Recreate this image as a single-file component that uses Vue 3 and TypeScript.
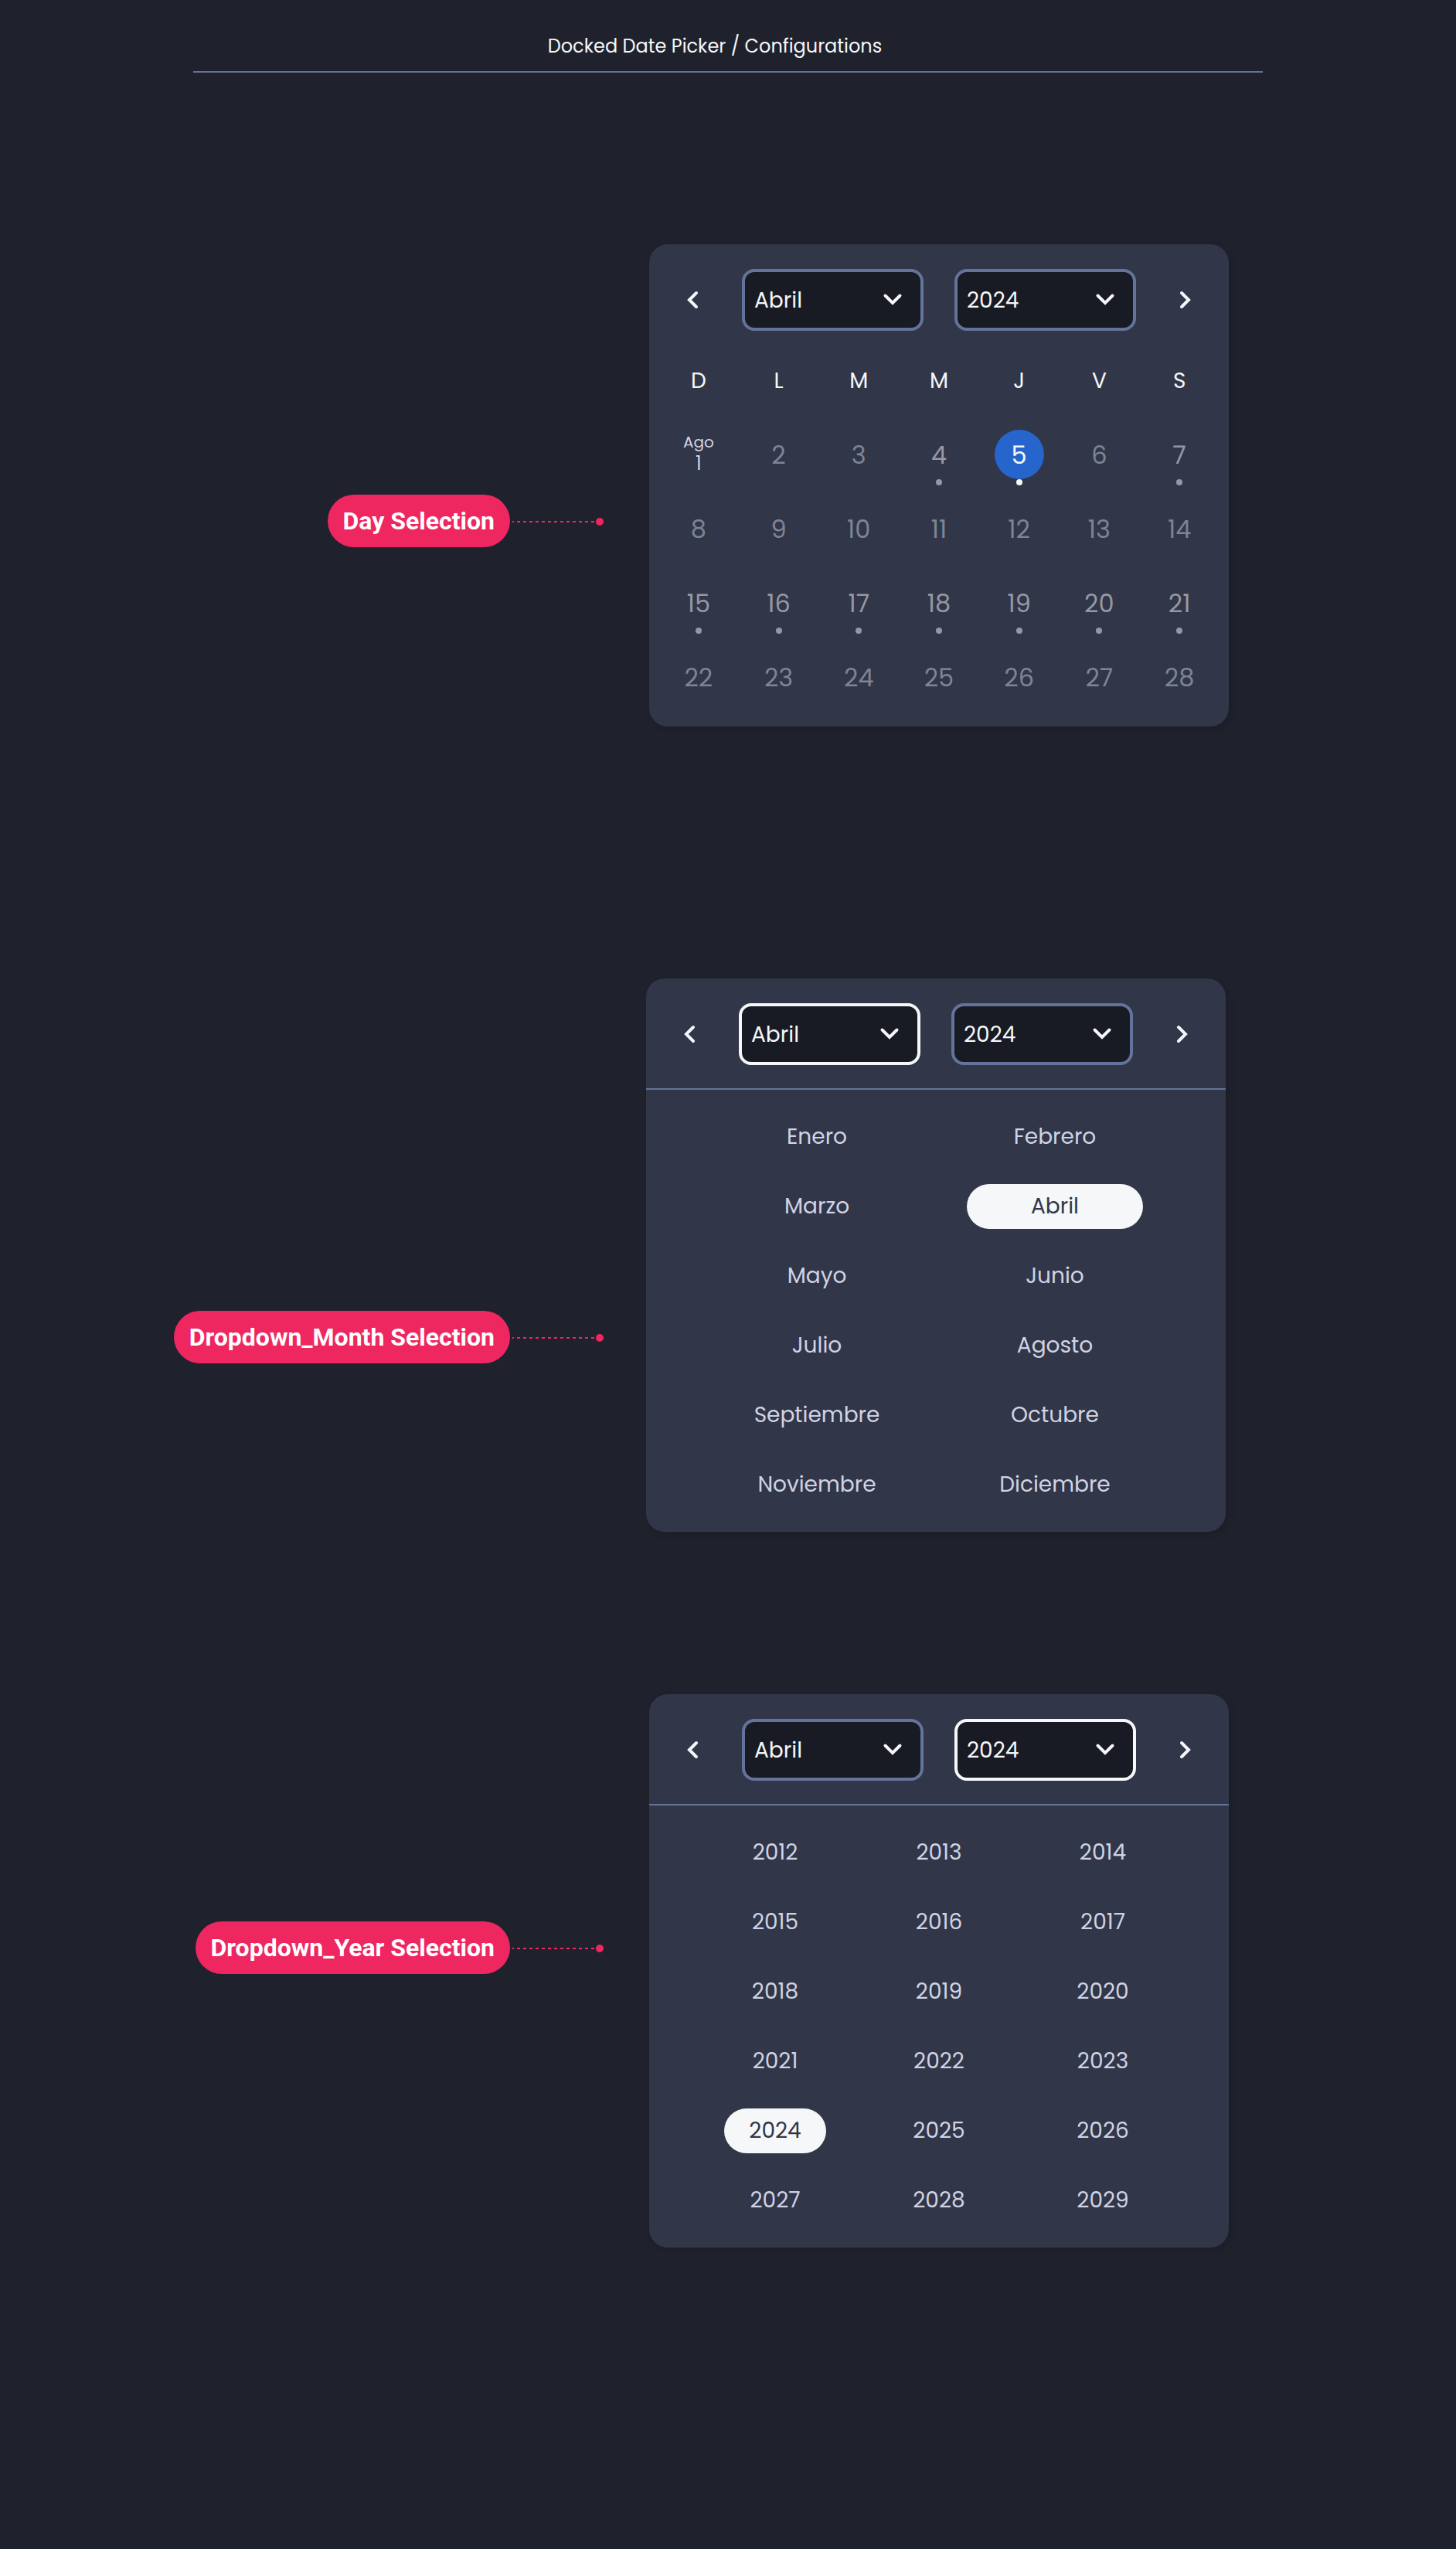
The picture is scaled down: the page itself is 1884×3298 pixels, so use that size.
<script setup lang="ts">
import { ref } from 'vue'

type Mode = 'day' | 'month' | 'year'

interface Example {
  id: string
  label: string
  mode: Mode
}

interface Day {
  value: number
  prefix?: string
  marked?: boolean
}

const examples: Example[] = [
  { id: 'day', label: 'Day Selection', mode: 'day' },
  { id: 'month', label: 'Dropdown_Month Selection', mode: 'month' },
  { id: 'year', label: 'Dropdown_Year Selection', mode: 'year' },
]

const weekdays: string[] = ['D', 'L', 'M', 'M', 'J', 'V', 'S']
const months: string[] = [
  'Enero', 'Febrero', 'Marzo', 'Abril', 'Mayo', 'Junio',
  'Julio', 'Agosto', 'Septiembre', 'Octubre', 'Noviembre', 'Diciembre',
]
const years: number[] = Array.from({ length: 18 }, (_, i) => 2012 + i)

const markedDays = new Set<number>([4, 5, 7, 15, 16, 17, 18, 19, 20, 21])
const weeks: Day[][] = Array.from({ length: 4 }, (_, w) =>
  Array.from({ length: 7 }, (_, d) => {
    const value = w * 7 + d + 1
    return { value, prefix: value === 1 ? 'Ago' : undefined, marked: markedDays.has(value) }
  }),
)

const day = ref<number>(5)
const month = ref<string>('Abril')
const year = ref<number>(2024)

function step(delta: number): void {
  const index = months.indexOf(month.value) + delta
  month.value = months[(index + 12) % 12]
  if (index < 0) year.value -= 1
  if (index > 11) year.value += 1
}
</script>

<template>
  <div class="page">
    <header class="page-header">
      <h1 class="page-title">Docked Date Picker / Configurations</h1>
    </header>

    <main class="board">
      <section v-for="ex in examples" :key="ex.id" class="example" :class="`example-${ex.id}`">
        <div class="callout">
          <h2 class="callout-label">{{ ex.label }}</h2>
          <svg class="callout-line" width="122" height="12" viewBox="0 0 122 12" aria-hidden="true">
            <path d="M3 7H112" stroke="currentColor" stroke-width="2" stroke-dasharray="4 4" stroke-dashoffset="2" fill="none" />
            <circle cx="116" cy="7" r="5" fill="currentColor" />
          </svg>
        </div>

        <div class="picker">
          <div class="toolbar" :class="{ divided: ex.mode !== 'day' }">
            <button type="button" class="arrow" aria-label="Mes anterior" @click="step(-1)">
              <svg width="48" height="48" viewBox="0 0 48 48" aria-hidden="true">
                <path class="stroke" d="M29 15L20 24L29 33" />
              </svg>
            </button>
            <div class="field">
              <select v-model="month" class="select" :class="{ open: ex.mode === 'month' }" aria-label="Mes">
                <option v-for="m in months" :key="m" :value="m">{{ m }}</option>
              </select>
              <svg class="caret" width="48" height="48" viewBox="0 0 48 48" aria-hidden="true">
                <path class="stroke" d="M14.5 18.5L24 28L33.5 18.5" />
              </svg>
            </div>
            <div class="field">
              <select v-model="year" class="select" :class="{ open: ex.mode === 'year' }" aria-label="Año">
                <option v-for="y in years" :key="y" :value="y">{{ y }}</option>
              </select>
              <svg class="caret" width="48" height="48" viewBox="0 0 48 48" aria-hidden="true">
                <path class="stroke" d="M14.5 18.5L24 28L33.5 18.5" />
              </svg>
            </div>
            <button type="button" class="arrow" aria-label="Mes siguiente" @click="step(1)">
              <svg width="48" height="48" viewBox="0 0 48 48" aria-hidden="true">
                <path class="stroke" d="M19 15L28 24L19 33" />
              </svg>
            </button>
          </div>

          <table v-if="ex.mode === 'day'" class="calendar">
            <thead>
              <tr>
                <th v-for="(w, i) in weekdays" :key="i" scope="col">{{ w }}</th>
              </tr>
            </thead>
            <tbody>
              <tr v-for="(week, wi) in weeks" :key="wi">
                <td v-for="d in week" :key="d.value">
                  <button
                    type="button"
                    class="day"
                    :class="{ marked: d.marked, first: d.prefix, selected: d.value === day }"
                    @click="day = d.value"
                  >
                    <span v-if="d.prefix" class="prefix">{{ d.prefix }}</span>
                    <span>{{ d.value }}</span>
                  </button>
                </td>
              </tr>
            </tbody>
          </table>

          <div v-else-if="ex.mode === 'month'" class="options months">
            <button
              v-for="m in months"
              :key="m"
              type="button"
              class="option"
              :class="{ chosen: m === month }"
              @click="month = m"
            >{{ m }}</button>
          </div>

          <div v-else class="options years">
            <button
              v-for="y in years"
              :key="y"
              type="button"
              class="option"
              :class="{ chosen: y === year }"
              @click="year = y"
            >{{ y }}</button>
          </div>
        </div>
      </section>
    </main>
  </div>
</template>

<style>
body {
  margin: 0;
  background: #1f212d;
}
</style>

<style scoped>
.page {
  box-sizing: border-box;
  min-height: 100vh;
  padding-bottom: 120px;
  background: #1f212d;
  color: #f5f7f9;
  font-family: Poppins, Inter, sans-serif;
  font-size: 28px;
}

.page *,
.page *::after {
  box-sizing: border-box;
}

.page-header {
  max-width: 1384px;
  margin: 0 auto;
  padding: 42px 34px 14px 0;
  border-bottom: 2px solid #637399;
}

.page-title {
  margin: 0;
  font-size: 24px;
  font-weight: 400;
  line-height: 36px;
  text-align: center;
}

.board {
  max-width: 1440px;
  margin: 0 auto;
  padding: 222px 72px 0 0;
  box-sizing: border-box;
}

.example {
  display: flex;
  justify-content: flex-end;
  align-items: flex-start;
  gap: 58px;
}

.example-month {
  gap: 54px;
  margin-top: 326px;
  padding-right: 4px;
}

.example-year {
  margin-top: 210px;
}

.callout {
  display: flex;
  flex: none;
  align-items: center;
  margin-top: 324px;
  color: #ee2761;
}

.example-month .callout {
  margin-top: 430px;
}

.example-year .callout {
  margin-top: 294px;
}

.callout-label {
  margin: 0;
  padding: 14px 20px;
  border-radius: 34px;
  background: #ee2761;
  color: #ffffff;
  font-family: Roboto, sans-serif;
  font-size: 32px;
  font-weight: 700;
  line-height: 40px;
  white-space: nowrap;
}

.picker {
  flex: 0 1 750px;
  min-width: 0;
  border-radius: 24px;
  background: #313649;
  box-shadow: 4px 4px 8px rgba(0, 0, 0, 0.12);
}

.toolbar {
  display: flex;
  align-items: center;
  gap: 40px;
  padding: 32px 32px 16px;
}

.toolbar.divided {
  padding-bottom: 30px;
  border-bottom: 2px solid #637399;
}

.arrow {
  display: flex;
  flex: none;
  padding: 0;
  border: 0;
  background: none;
  color: inherit;
  cursor: pointer;
}

.stroke {
  fill: none;
  stroke: #f5f7f9;
  stroke-width: 4;
  stroke-linecap: round;
}

.field {
  position: relative;
  flex: 1 1 0;
  min-width: 0;
}

.select {
  display: block;
  width: 100%;
  height: 80px;
  padding: 0 60px 0 12px;
  border: 4px solid #637399;
  border-radius: 16px;
  background: #181b24;
  color: #f5f7f9;
  font: inherit;
  appearance: none;
  cursor: pointer;
}

.select.open {
  border-color: #f5f7f9;
}

.caret {
  position: absolute;
  top: 16px;
  right: 16px;
  pointer-events: none;
}

.calendar {
  width: calc(100% - 24px);
  margin: 0 12px;
  padding-bottom: 16px;
  border-spacing: 0;
  table-layout: fixed;
}

.calendar th,
.calendar td {
  height: 96px;
  padding: 0;
  text-align: center;
}

.calendar th {
  padding-top: 2px;
  font-weight: 400;
}

.day {
  position: relative;
  display: flex;
  flex-direction: column;
  align-items: center;
  justify-content: center;
  width: 64px;
  height: 64px;
  margin: 0 auto;
  padding: 2px 0 0;
  border: 0;
  border-radius: 50%;
  background: none;
  color: #7f8395;
  font: inherit;
  font-size: 32px;
  line-height: 40px;
  cursor: pointer;
}

.day.marked {
  color: #9598a3;
}

.day.marked::after {
  content: '';
  position: absolute;
  top: 100%;
  left: 28px;
  width: 8px;
  height: 8px;
  border-radius: 50%;
  background: currentColor;
}

.day.first {
  justify-content: flex-start;
  color: #d0d3e3;
  font-size: 24px;
  line-height: 28px;
}

.prefix {
  font-size: 20px;
}

.day.selected {
  background: #2665cb;
  color: #f5f7f9;
}

.options {
  display: grid;
  justify-content: center;
  gap: 32px 80px;
  padding: 32px;
}

.months {
  grid-template-columns: repeat(2, minmax(0, 228px));
}

.years {
  grid-template-columns: repeat(3, minmax(0, 132px));
}

.option {
  height: 58px;
  padding: 0;
  border: 0;
  border-radius: 29px;
  background: none;
  color: #d0d3e3;
  font: inherit;
  cursor: pointer;
}

.option.chosen {
  background: #f5f7f9;
  color: #313649;
}

@media (max-width: 1400px) {
  .board {
    padding: 80px 24px 0;
  }

  .example,
  .example-month,
  .example-year {
    flex-direction: column;
    align-items: center;
    gap: 24px;
    margin-top: 48px;
    padding-right: 0;
  }

  .example .callout {
    margin-top: 0;
  }

  .callout-line {
    display: none;
  }

  .picker {
    flex: none;
    width: 100%;
    max-width: 750px;
  }
}
</style>
